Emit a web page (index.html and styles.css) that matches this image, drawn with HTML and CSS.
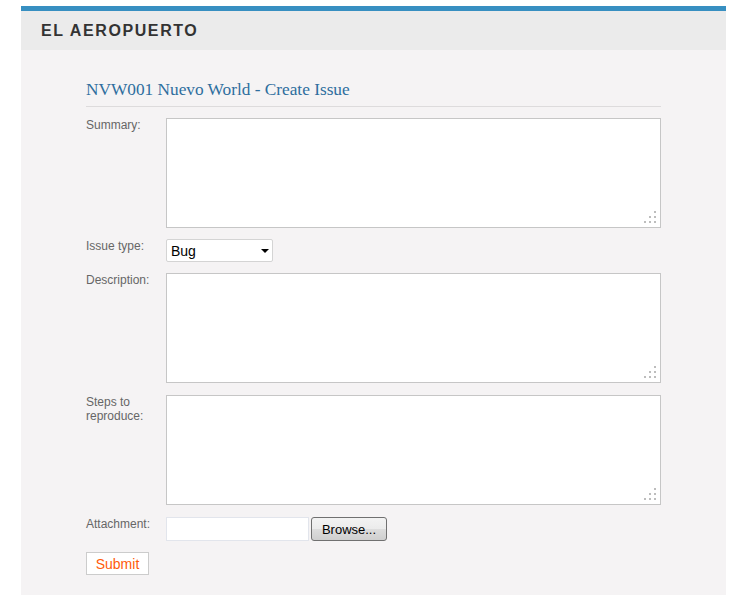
FILE: index.html
```html
<!DOCTYPE html>
<html>
<head>
<meta charset="utf-8">
<link rel="stylesheet" href="styles.css">
</head>
<body>
<div class="page">
  <div class="header"><span class="brand">EL AEROPUERTO</span></div>
  <div class="content">
    <h1 class="title">NVW001 Nuevo World - Create Issue</h1>
    <form class="form">
      <div class="row">
        <label class="label">Summary:</label>
        <div class="ta-wrap">
          <textarea class="ta"></textarea>
          <svg class="grip" width="12" height="12" viewBox="0 0 12 12"><g fill="#bdbdbd"><rect x="10" y="0" width="2" height="2"/><rect x="5" y="5" width="2" height="2"/><rect x="10" y="5" width="2" height="2"/><rect x="0" y="10" width="2" height="2"/><rect x="5" y="10" width="2" height="2"/><rect x="10" y="10" width="2" height="2"/></g></svg>
        </div>
      </div>
      <div class="row">
        <label class="label">Issue type:</label>
        <div class="select-wrap">
          <select class="select"><option>Bug</option></select>
        </div>
      </div>
      <div class="row row-b">
        <label class="label">Description:</label>
        <div class="ta-wrap">
          <textarea class="ta"></textarea>
          <svg class="grip" width="12" height="12" viewBox="0 0 12 12"><g fill="#bdbdbd"><rect x="10" y="0" width="2" height="2"/><rect x="5" y="5" width="2" height="2"/><rect x="10" y="5" width="2" height="2"/><rect x="0" y="10" width="2" height="2"/><rect x="5" y="10" width="2" height="2"/><rect x="10" y="10" width="2" height="2"/></g></svg>
        </div>
      </div>
      <div class="row row-b">
        <label class="label">Steps to reproduce:</label>
        <div class="ta-wrap">
          <textarea class="ta"></textarea>
          <svg class="grip" width="12" height="12" viewBox="0 0 12 12"><g fill="#bdbdbd"><rect x="10" y="0" width="2" height="2"/><rect x="5" y="5" width="2" height="2"/><rect x="10" y="5" width="2" height="2"/><rect x="0" y="10" width="2" height="2"/><rect x="5" y="10" width="2" height="2"/><rect x="10" y="10" width="2" height="2"/></g></svg>
        </div>
      </div>
      <div class="row">
        <label class="label">Attachment:</label>
        <div class="file">
          <input class="file-name" type="text" readonly>
          <button type="button" class="browse">Browse...</button>
        </div>
      </div>
      <div class="submit-row">
        <button type="button" class="submit">Submit</button>
      </div>
    </form>
  </div>
</div>
</body>
</html>
```

FILE: styles.css
```css
html, body {
  margin: 0;
  padding: 0;
  background: #ffffff;
}
.page {
  margin: 6px 0 0 21px;
  width: 705px;
  border-top: 5px solid #378fc1;
  font-family: "Liberation Sans", Arial, sans-serif;
}
.header {
  height: 39px;
  background: #ebebeb;
  display: flex;
  align-items: center;
  padding-left: 20px;
}
.brand {
  font-size: 16px;
  font-weight: bold;
  letter-spacing: 1.6px;
  color: #333333;
}
.content {
  background: #f5f3f4;
  padding: 30px 65px 20px 65px;
}
.title {
  margin: 0;
  font-family: Georgia, "Liberation Serif", "DejaVu Serif", serif;
  font-weight: normal;
  font-size: 17.3px;
  line-height: 20px;
  color: #2e6e9e;
  padding-bottom: 6px;
  border-bottom: 1px solid #dddbdc;
  margin-bottom: 11px;
}
.form {
  display: flex;
  flex-direction: column;
}
.row {
  display: flex;
  margin-bottom: 11px;
}
.row-b + .row-b, .row-b + .row {
  margin-top: 1px;
}
.label {
  width: 80px;
  flex: none;
  font-size: 12px;
  line-height: 14px;
  color: #666666;
}
.ta-wrap {
  position: relative;
  width: 495px;
  height: 110px;
}
.ta {
  display: block;
  box-sizing: border-box;
  width: 495px;
  height: 110px;
  margin: 0;
  border: 1px solid #c6c6c6;
  background: #ffffff;
  resize: none;
  padding: 2px;
}
.grip {
  position: absolute;
  right: 5px;
  bottom: 5px;
}
.select-wrap {
  position: relative;
  width: 107px;
  height: 23px;
}
.select-wrap::after {
  content: "";
  position: absolute;
  right: 4px;
  top: 10px;
  border-left: 4px solid transparent;
  border-right: 4px solid transparent;
  border-top: 4px solid #000000;
  pointer-events: none;
}
.select {
  -webkit-appearance: none;
  appearance: none;
  box-sizing: border-box;
  width: 107px;
  height: 23px;
  margin: 0;
  border: 1px solid #d4d4d4;
  border-radius: 2px;
  background: #ffffff;
  font-family: "Liberation Sans", Arial, sans-serif;
  font-size: 14px;
  color: #000000;
  padding: 0 0 0 4px;
}
.file {
  display: flex;
  gap: 2px;
  height: 24px;
}
.file-name {
  box-sizing: border-box;
  width: 143px;
  height: 24px;
  margin: 0;
  border: 1px solid #e2e5ec;
  background: #ffffff;
  padding: 0;
}
.browse {
  box-sizing: border-box;
  width: 76px;
  height: 24px;
  margin: 0;
  border: 1px solid #707070;
  border-radius: 3px;
  background: linear-gradient(#f3f3f3 0%, #ebebeb 50%, #dddddd 51%, #cfcfcf 100%);
  font-family: "Liberation Sans", Arial, sans-serif;
  font-size: 13px;
  color: #000000;
  padding: 0;
}
.submit-row {
  display: flex;
}
.submit {
  box-sizing: border-box;
  width: 63px;
  height: 23px;
  margin: 0;
  border: 1px solid #cccccc;
  background: #ffffff;
  font-family: "Liberation Sans", Arial, sans-serif;
  font-size: 14px;
  color: #ff5b0a;
  padding: 0;
}
```
